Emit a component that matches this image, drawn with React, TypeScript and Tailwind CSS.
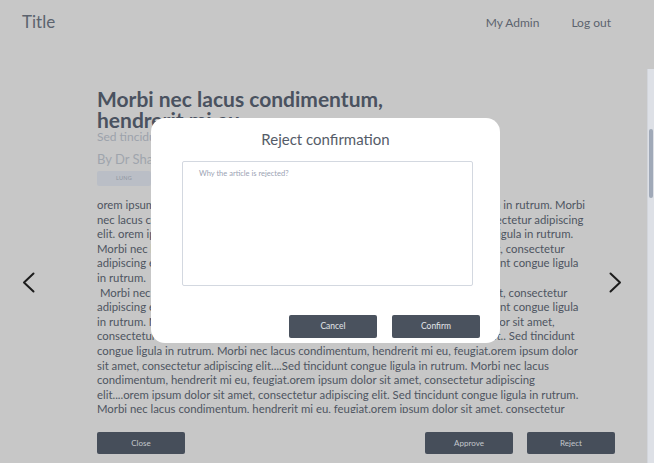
import React from "react";

const lines: string[] = [
  "orem ipsum dolor sit amet, consectetur adipiscing elit. Sed tincidunt congue ligula in rutrum. Morbi",
  "nec lacus condimentum, hendrerit mi eu, feugiat.orem ipsum dolor sit amet, consectetur adipiscing",
  "elit. orem ipsum dolor sit amet, consectetur adipiscing elit. Sed tincidunt congue ligula in rutrum.",
  "Morbi nec lacus condimentum, hendrerit mi eu, feugiat.orem ipsum dolor sit amet, consectetur",
  "adipiscing elit....orem ipsum dolor sit amet, consectetur adipiscing elit. Sed tincidunt congue ligula",
  "in rutrum.",
  "\u00a0Morbi nec lacus condimentum, hendrerit mi eu, feugiat.orem ipsum dolor sit amet, consectetur",
  "adipiscing elit....orem ipsum dolor sit amet, consectetur adipiscing elit. Sed tincidunt congue ligula",
  "in rutrum. Morbi nec lacus condimentum, hendrerit mi eu, feugiat.orem ipsum dolor sit amet,",
  "consectetur adipiscing elit....orem ipsum dolor sit amet, consectetur adipiscing elit.. Sed tincidunt",
  "congue ligula in rutrum. Morbi nec lacus condimentum, hendrerit mi eu, feugiat.orem ipsum dolor",
  "sit amet, consectetur adipiscing elit....Sed tincidunt congue ligula in rutrum. Morbi nec lacus",
  "condimentum, hendrerit mi eu, feugiat.orem ipsum dolor sit amet, consectetur adipiscing",
  "elit....orem ipsum dolor sit amet, consectetur adipiscing elit. Sed tincidunt congue ligula in rutrum.",
  "Morbi nec lacus condimentum, hendrerit mi eu, feugiat.orem ipsum dolor sit amet, consectetur",
  "adipiscing elit....orem ipsum dolor sit amet, consectetur adipiscing elit. Sed tincidunt congue ligula",
];

function Chevron({ dir }: { dir: "left" | "right" }) {
  return (
    <svg width="13" height="21" viewBox="0 0 13 21" fill="none">
      {dir === "left" ? (
        <polyline points="11.5,1.5 2,10.5 11.5,19.5" stroke="#1c1c1c" strokeWidth="2" strokeLinecap="round" strokeLinejoin="round" />
      ) : (
        <polyline points="1.5,1.5 11,10.5 1.5,19.5" stroke="#1c1c1c" strokeWidth="2" strokeLinecap="round" strokeLinejoin="round" />
      )}
    </svg>
  );
}

export default function App() {
  return (
    <div
      className="relative w-full h-[463px] overflow-hidden bg-[#c7c7c7] flex flex-col"
      style={{ fontFamily: "Lato, 'Noto Sans', sans-serif" }}
    >
      {/* Header */}
      <header className="h-[69px] shrink-0 flex items-start justify-between pl-[22px] pr-[43px] pt-[11px]">
        <div className="text-[17px] leading-[22px] text-[#5c636e]">Title</div>
        <nav className="flex gap-[32px] mt-[4px] text-[12px] leading-[15px] text-[#5c636e]">
          <span>My Admin</span>
          <span>Log out</span>
        </nav>
      </header>

      {/* Body */}
      <div className="flex-1 flex min-h-0">
        <div className="flex-1 flex flex-col min-w-0">
          <div className="h-[344px] flex overflow-hidden">
            <div className="w-[97px] shrink-0 pl-[22px] pt-[203px]">
              <Chevron dir="left" />
            </div>
            <article className="w-[493px] shrink-0 pt-[19px]">
              <h1 className="h-[41px] text-[21px] leading-[21px] font-bold text-[#4a5260] whitespace-nowrap">
                Morbi nec lacus condimentum,
                <br />
                hendrerit mi eu
              </h1>
              <p className="text-[12px] leading-[15px] text-[#9ca2ab]">
                Sed tincidunt congue ligula in rutrum
              </p>
              <p className="mt-[7px] text-[13px] leading-[16px] text-[#9fa5ad]">By Dr Sharon Miller</p>
              <div className="mt-[4px] flex gap-[8px]">
                <span className="w-[54px] h-[15px] rounded-[2px] bg-[#babec6] text-[5.5px] tracking-[0.3px] text-[#8f95a0] flex items-center justify-center">
                  LUNG
                </span>
                <span className="w-[54px] h-[15px] rounded-[2px] bg-[#babec6] text-[5.5px] tracking-[0.3px] text-[#8f95a0] flex items-center justify-center">
                  CANCER
                </span>
              </div>
              <div className="mt-[12px] text-[11.35px] leading-[14.6px] text-[#4e5561]">
                {lines.map((l, i) => (
                  <div key={i} className="whitespace-pre">
                    {l}
                  </div>
                ))}
              </div>
            </article>
            <div className="flex-1 pl-[19px] pt-[203px]">
              <Chevron dir="right" />
            </div>
          </div>
          <div className="mt-[19px] flex pl-[97px] pr-[32px]">
            <button className="w-[88px] h-[22px] rounded-[2px] bg-[#464e5a] text-[8px] text-[#c3c7cc]">
              Close
            </button>
            <div className="ml-auto flex gap-[14px]">
              <button className="w-[88px] h-[22px] rounded-[2px] bg-[#464e5a] text-[8px] text-[#c3c7cc]">
                Approve
              </button>
              <button className="w-[88px] h-[22px] rounded-[2px] bg-[#464e5a] text-[8px] text-[#c3c7cc]">
                Reject
              </button>
            </div>
          </div>
        </div>
        {/* Scrollbar */}
        <div className="w-[7px] shrink-0 bg-[#dde0e6] border-l border-[#d2d5db]">
          <div className="mt-[60px] ml-[1px] w-[4px] h-[69px] rounded-full bg-[#a0a9b8]" />
        </div>
      </div>

      {/* Modal */}
      <div className="absolute left-[151px] top-[118px] w-[349px] h-[225px] bg-white rounded-[14px] flex flex-col">
        <h2 className="mt-[11px] text-center text-[15px] leading-[20px] text-[#555c68]">
          Reject confirmation
        </h2>
        <textarea
          className="mt-[12px] ml-[31px] w-[291px] h-[125px] resize-none border border-[#d3d8e0] rounded-[2px] pl-[16px] pt-[7px] text-[7.5px] leading-[10px] outline-none placeholder-[#9ba3b3]"
          style={{ fontFamily: "Lato, 'Noto Sans', sans-serif" }}
          placeholder="Why the article is rejected?"
        />
        <div className="mt-[29px] flex justify-end gap-[15px] pr-[20px]">
          <button className="w-[88px] h-[23px] rounded-[2px] bg-[#4a525e] text-[8.5px] text-[#e2e5e9]">
            Cancel
          </button>
          <button className="w-[88px] h-[23px] rounded-[2px] bg-[#4a525e] text-[8.5px] text-[#e2e5e9]">
            Confirm
          </button>
        </div>
      </div>
    </div>
  );
}
